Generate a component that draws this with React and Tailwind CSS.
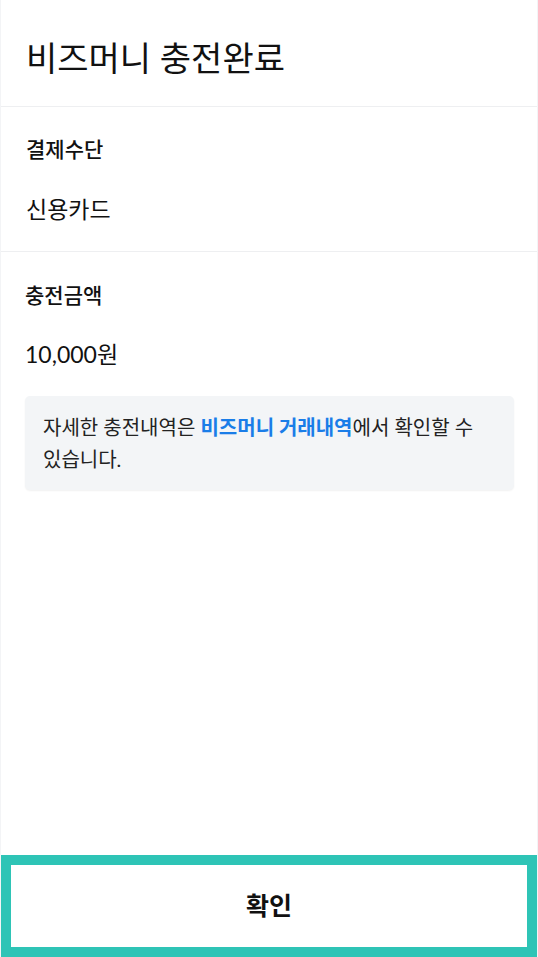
import React from 'react';

const font = { fontFamily: 'Lato, "Noto Sans CJK KR", sans-serif' };

const Section = ({ label, value, valueClass, children }) => (
  <section className="border-b border-[#eeeff1] px-[25px] pt-7 pb-7">
    <p className="text-[21px] leading-[28px] font-medium text-[#111]">{label}</p>
    <p className={`mt-8 text-[#111] ${valueClass}`}>{value}</p>
    {children}
  </section>
);

const App = () => {
  return (
    <div className="min-h-[957px] w-full bg-white flex flex-col border-x border-[#f3f4f6]" style={font}>
      {/* Header */}
      <header className="h-[107px] border-b border-[#eeeff1] px-[25px] pt-[9px] flex items-center">
        <h1 className="text-[34px] leading-[40px] font-normal text-[#111]">비즈머니 충전완료</h1>
      </header>

      <Section label="결제수단" value="신용카드" valueClass="text-[23px] leading-[28px]" />

      <section className="px-[24px] pt-[29px]">
        <p className="text-[21px] leading-[28px] font-medium text-[#111]">충전금액</p>
        <p className="mt-[30px] text-[23px] leading-[30px] text-[#111]">10,000원</p>

        <div className="mt-[27px] w-[489px] rounded-[5px] bg-[#f3f5f7] shadow-[0_1px_2px_rgba(0,0,0,0.06)] px-[18px] py-[15px]">
          <p className="text-[20px] leading-[32px] text-[#222]">
            자세한 충전내역은 <span className="font-bold text-[#1a7de8]">비즈머니 거래내역</span>에서 확인할 수 있습니다.
          </p>
        </div>
      </section>

      <div className="flex-1" />

      {/* Confirm button */}
      <button
        type="button"
        className="h-[102px] w-full border-[10px] border-[#2ec4b6] bg-white flex items-center justify-center text-[25px] font-bold text-[#111]"
      >
        확인
      </button>
    </div>
  );
};

export default App;
